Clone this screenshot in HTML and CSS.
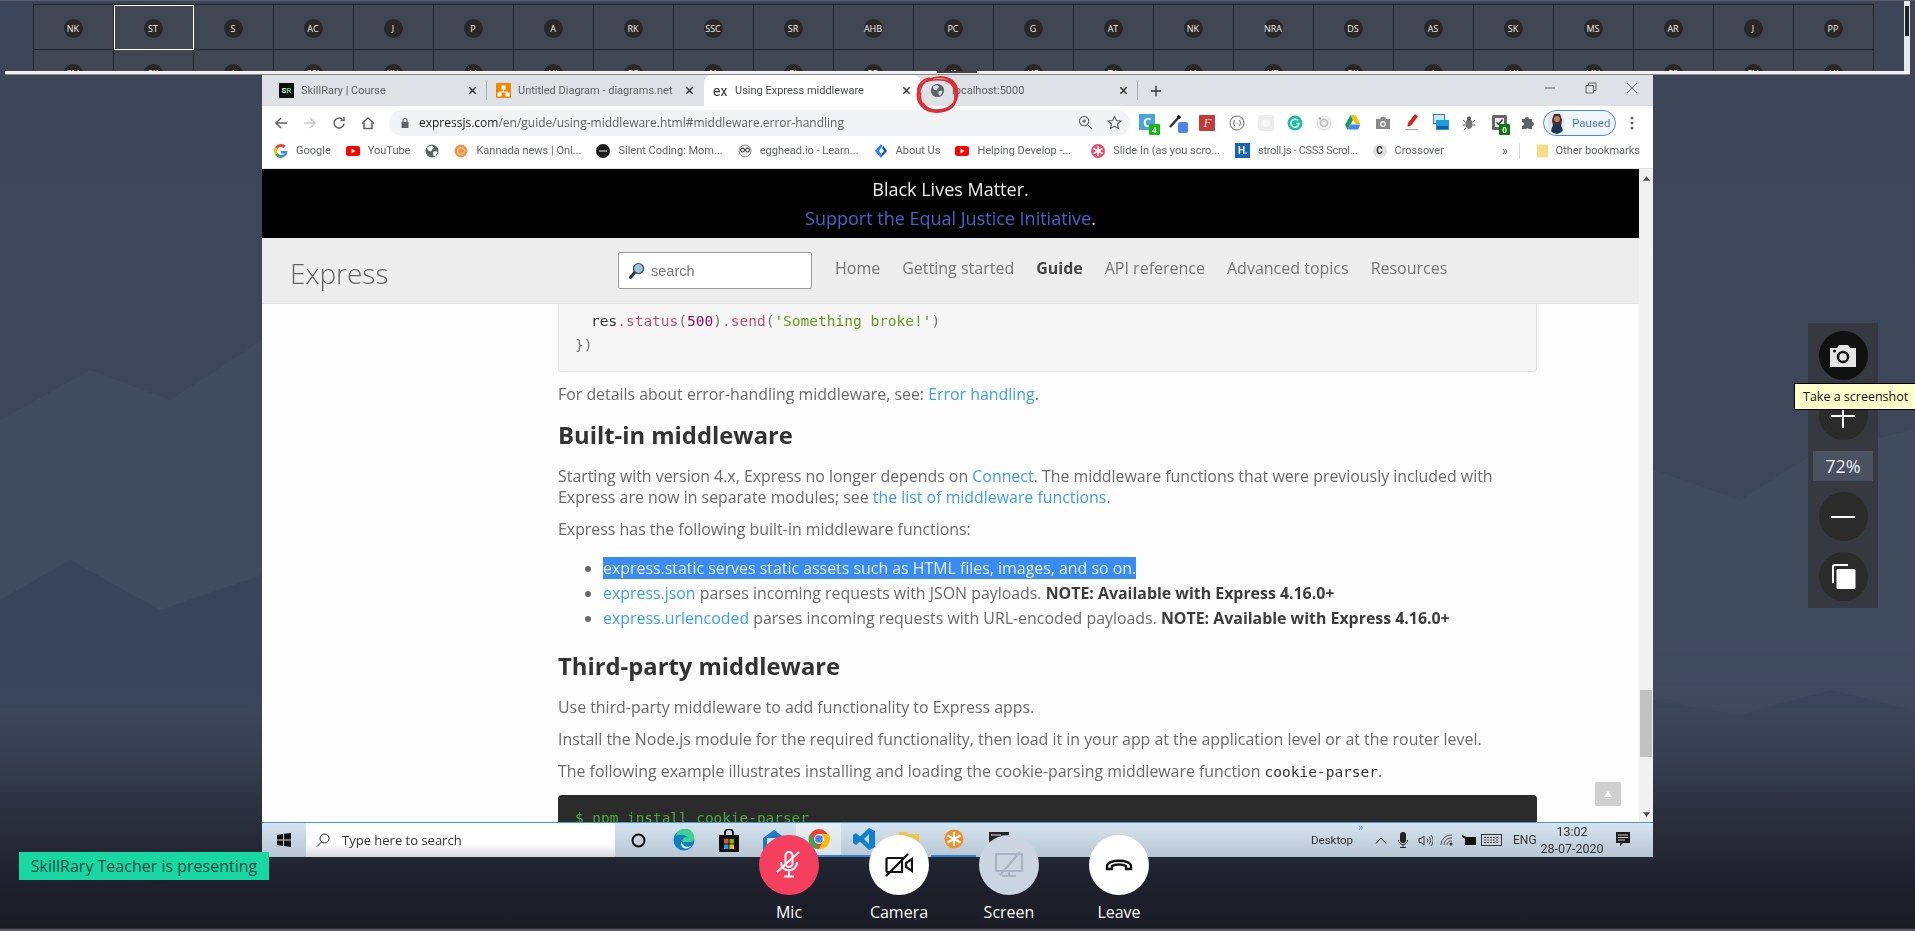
FILE: index.html
```html
<!DOCTYPE html>
<html lang="en">
<head>
<meta charset="utf-8">
<title>SkillRary meeting</title>
<link rel="stylesheet" href="styles.css">
</head>
<body>
<div class="desk">
  <svg class="ridges" viewBox="0 0 1915 931" preserveAspectRatio="none" aria-hidden="true">
    <path fill="#414b5e" d="M0 420 90 370 170 400 262 340 400 420V860H0Z"/>
    <path fill="#3a4559" d="M0 600 70 560 160 610 262 575 300 860H0Z"/>
    <path fill="#414b5e" d="M1653 470 1740 500 1820 450 1915 430V860H1653Z"/>
    <path fill="#3a4559" d="M1653 700 1740 715 1830 690 1915 710V860H1653Z"/>
  </svg>

  <section class="strip">
    <div class="tiles">
      <div class="tile"><span class="avatar">NK</span></div>
      <div class="tile tile-active"><span class="avatar">ST</span></div>
      <div class="tile"><span class="avatar">S</span></div>
      <div class="tile"><span class="avatar">AC</span></div>
      <div class="tile"><span class="avatar">J</span></div>
      <div class="tile"><span class="avatar">P</span></div>
      <div class="tile"><span class="avatar">A</span></div>
      <div class="tile"><span class="avatar">RK</span></div>
      <div class="tile"><span class="avatar">SSC</span></div>
      <div class="tile"><span class="avatar">SR</span></div>
      <div class="tile"><span class="avatar">AHB</span></div>
      <div class="tile"><span class="avatar">PC</span></div>
      <div class="tile"><span class="avatar">G</span></div>
      <div class="tile"><span class="avatar">AT</span></div>
      <div class="tile"><span class="avatar">NK</span></div>
      <div class="tile"><span class="avatar">NRA</span></div>
      <div class="tile"><span class="avatar">DS</span></div>
      <div class="tile"><span class="avatar">AS</span></div>
      <div class="tile"><span class="avatar">SK</span></div>
      <div class="tile"><span class="avatar">MS</span></div>
      <div class="tile"><span class="avatar">AR</span></div>
      <div class="tile"><span class="avatar">J</span></div>
      <div class="tile"><span class="avatar">PP</span></div>
      <div class="tile"><span class="avatar">SM</span></div>
      <div class="tile"><span class="avatar">SK</span></div>
      <div class="tile"><span class="avatar">A</span></div>
      <div class="tile"><span class="avatar">SSI</span></div>
      <div class="tile"><span class="avatar">KN</span></div>
      <div class="tile"><span class="avatar">M</span></div>
      <div class="tile"><span class="avatar">NI</span></div>
      <div class="tile"><span class="avatar">RS</span></div>
      <div class="tile"><span class="avatar">N</span></div>
      <div class="tile"><span class="avatar">RI</span></div>
      <div class="tile"><span class="avatar">PB</span></div>
      <div class="tile"><span class="avatar">K</span></div>
      <div class="tile"><span class="avatar">HS</span></div>
      <div class="tile"><span class="avatar">TA</span></div>
      <div class="tile"><span class="avatar">V</span></div>
      <div class="tile"><span class="avatar">NB</span></div>
      <div class="tile"><span class="avatar">RK</span></div>
      <div class="tile"><span class="avatar">A</span></div>
      <div class="tile"><span class="avatar">AK</span></div>
      <div class="tile"><span class="avatar">MH</span></div>
      <div class="tile"><span class="avatar">SS</span></div>
      <div class="tile"><span class="avatar">RV</span></div>
      <div class="tile"><span class="avatar">AK</span></div>
    </div>
    <div class="strip-scroll"><span class="strip-thumb"></span></div>
  </section>
  <div class="strip-edge"><span class="edge-thumb"></span></div>

  <main class="browser">
    <div class="tabbar">
      <div class="tab">
        <span class="favicon fav-sr">S<b>R</b></span>
        <span class="tab-title">SkillRary | Course</span>
        <svg class="tab-x" viewBox="0 0 10 10"><path d="M1.5 1.5l7 7M8.5 1.5l-7 7"/></svg>
      </div>
      <div class="tab tab-sep">
        <svg class="favicon" viewBox="0 0 15 15"><rect width="15" height="15" rx="1" fill="#f08705"/><path fill="none" stroke="#fff" d="M7.5 6v3M3.5 11V9h8v2"/><rect x="5.5" y="2.5" width="4" height="4" fill="#fff"/><rect x="1.5" y="9.5" width="4" height="4" fill="#fff"/><rect x="9.5" y="9.5" width="4" height="4" fill="#fff"/></svg>
        <span class="tab-title">Untitled Diagram - diagrams.net</span>
        <svg class="tab-x" viewBox="0 0 10 10"><path d="M1.5 1.5l7 7M8.5 1.5l-7 7"/></svg>
      </div>
      <div class="tab tab-on">
        <span class="favicon fav-ex">ex</span>
        <span class="tab-title">Using Express middleware</span>
        <svg class="tab-x" viewBox="0 0 10 10"><path d="M1.5 1.5l7 7M8.5 1.5l-7 7"/></svg>
      </div>
      <div class="tab tab-end">
        <svg class="favicon" viewBox="0 0 16 16"><circle cx="8" cy="8" r="7" fill="#5f6368"/><path fill="#dee1e6" d="M5 3l3-1 2 2-2 2-1 2-3-1-1-3zM9 9l3-1 1.500 1-2 4-2 0z"/></svg>
        <span class="tab-title">localhost:5000</span>
        <svg class="tab-x" viewBox="0 0 10 10"><path d="M1.5 1.5l7 7M8.5 1.5l-7 7"/></svg>
      </div>
      <svg class="tab-new" viewBox="0 0 14 14"><path d="M7 1v12M1 7h12"/></svg>
      <div class="win-btns">
        <svg viewBox="0 0 12 12"><path d="M1 6h10"/></svg>
        <svg viewBox="0 0 12 12"><path d="M1 3.500h7.500V11H1zM3.500 3.500V1H11v7.500H8.500"/></svg>
        <svg viewBox="0 0 12 12"><path d="M1 1l10 10M11 1 1 11"/></svg>
      </div>
    </div>

    <div class="toolbar">
      <div class="nav-btn"><svg viewBox="0 0 14 14"><path d="M13 7H2M7 2 2 7l5 5"/></svg></div>
      <div class="nav-btn nav-off"><svg viewBox="0 0 14 14"><path d="M1 7h11M7 2l5 5-5 5"/></svg></div>
      <div class="nav-btn"><svg viewBox="0 0 14 14"><path d="M12 7.500A5 5 0 1 1 10.500 3.500M12 1v3.500H8.500"/></svg></div>
      <div class="nav-btn"><svg viewBox="0 0 14 14"><path d="M1 7.500 7 2l6 5.500M3 6.500V12.500h8V6.500"/></svg></div>
      <div class="omnibox">
        <svg class="lock" viewBox="0 0 12 12"><path fill="#5f6368" d="M2.500 5h7v6h-7z"/><path fill="none" stroke="#5f6368" stroke-width="1.200" d="M4 5V3.500a2 2 0 0 1 4 0V5"/></svg>
        <span class="url"><span class="url-host">expressjs.com</span>/en/guide/using-middleware.html#middleware.error-handling</span>
        <svg class="omni-ico omni-first" viewBox="0 0 16 16"><circle cx="6.500" cy="6.500" r="5"/><path d="M10.500 10.500 15 15M4.500 6.500h4M6.500 4.500v4"/></svg>
        <svg class="omni-ico" viewBox="0 0 16 16"><path d="M8 1.500l2 4.400 4.800.5-3.600 3.200 1 4.700L8 11.900l-4.200 2.400 1-4.700L1.200 6.400 6 5.900z"/></svg>
      </div>
      <div class="exts">
        <span class="ext"><span class="ext-c">C</span><span class="ext-badge ext-badge-g">4</span></span>
        <span class="ext"><svg width="20" height="20" viewBox="0 0 20 20"><path stroke="#333" stroke-width="2.500" d="M2 14 11 4"/><path stroke="#111" stroke-width="3.500" d="M10 5l2-2"/><rect x="10" y="9" width="10" height="11" rx="2" fill="#4a86f0"/></svg></span>
        <span class="ext"><span class="ext-f">F</span></span>
        <span class="ext"><svg width="16" height="16" viewBox="0 0 16 16"><circle cx="8" cy="8" r="7" fill="#fff" stroke="#666"/><path fill="none" stroke="#666" d="M5.500 5 4.500 8l1 3M10.500 5l1 3-1 3M7.500 8h1"/></svg></span>
        <span class="ext"><svg width="16" height="16" viewBox="0 0 16 16"><rect width="16" height="16" rx="2" fill="#ececec"/><circle cx="8" cy="8" r="4" fill="#f7f7f7"/></svg></span>
        <span class="ext"><svg width="16" height="16" viewBox="0 0 16 16"><circle cx="8" cy="8" r="7.500" fill="#15c39a"/><path fill="none" stroke="#fff" stroke-width="1.500" d="M11 5.500A4 4 0 1 0 12 8.500H9.500"/></svg></span>
        <span class="ext"><svg width="16" height="16" viewBox="0 0 16 16"><circle cx="8" cy="8" r="7" fill="#f1f1f1" stroke="#ddd"/><circle cx="8" cy="8" r="3.500" fill="none" stroke="#bbb" stroke-width="1.500"/><circle cx="4" cy="3.500" r="1.200" fill="#aaa"/></svg></span>
        <span class="ext"><svg width="16" height="15" viewBox="0 0 16 15"><path fill="#fbbc04" d="M5.500 0h5l5 9h-5z"/><path fill="#1a9e5c" d="M5.500 0 0 10l2.500 4.500L8 5z"/><path fill="#4285f4" d="M5.500 9.500h10L13 14.500H2.500z"/></svg></span>
        <span class="ext"><svg width="16" height="14" viewBox="0 0 16 14"><path fill="#8a8a8a" d="M1 3h4l1-2h4l1 2h4v10H1z"/><circle cx="8" cy="8" r="3" fill="#eee"/><circle cx="8" cy="8" r="1.500" fill="#8a8a8a"/></svg></span>
        <span class="ext"><svg width="16" height="17" viewBox="0 0 16 17"><path fill="#e0201b" d="M11 0l3 2.500-7 9-3.500 1.500.5-4z"/><path fill="none" stroke="#c99" d="M1 15.500h13"/></svg></span>
        <span class="ext"><svg width="16" height="17" viewBox="0 0 16 17"><rect x="0.500" y="0.500" width="11" height="9" fill="#cfe6f8" stroke="#2a7fc9"/><rect x="3" y="6" width="13" height="10" fill="#1b9ce0"/><path fill="#0d5f94" d="M4 12h11v3H4z"/></svg></span>
        <span class="ext"><svg width="16" height="16" viewBox="0 0 16 16"><ellipse cx="7" cy="9" rx="3.500" ry="5" fill="#777"/><circle cx="7" cy="3.500" r="2" fill="#555"/><path fill="none" stroke="#555" d="M3.500 7 1 5M3.500 10H.500M4 13l-2 2.500M10.500 7 13 5M10.500 10h3"/></svg></span>
        <span class="ext"><svg width="15" height="15" viewBox="0 0 15 15"><rect width="15" height="15" rx="1.500" fill="#666"/><rect x="3" y="3" width="9" height="9" fill="#eee"/><path fill="none" stroke="#333" stroke-width="1.300" d="M4.500 7.500l2 2 4-5"/></svg><span class="ext-badge ext-badge-d">0</span></span>
        <span class="ext"><svg width="15" height="15" viewBox="0 0 15 15"><path fill="#5f6368" d="M1 4h3a2 2 0 0 1 4 0h3v3a2 2 0 0 1 0 4v3H8a2 2 0 0 0-3 0H1v-3a2 2 0 0 0 0-4z"/></svg></span>
      </div>
      <div class="pill">
        <svg class="pill-face" width="17" height="22" viewBox="0 0 17 22"><rect width="17" height="22" fill="#dfe4ea"/><path fill="#4a2b22" d="M6 2h6l2 6-1 6H5L4 8z"/><circle cx="9" cy="7" r="3" fill="#b98465"/><path fill="#1d3559" d="M3 22c0-8 3-10 6-10s6 2 6 10z"/></svg>
        <span>Paused</span>
      </div>
      <svg class="dots" viewBox="0 0 4 14"><circle cx="2" cy="2" r="1.500"/><circle cx="2" cy="7" r="1.500"/><circle cx="2" cy="12" r="1.500"/></svg>
    </div>

    <div class="bookmarks">
      <span class="bm"><svg class="bm-ico" viewBox="0 0 14 14"><path fill="#4285f4" d="M13.500 7H7v2.500h3.800A4 4 0 0 1 7 11v3a7 7 0 0 0 6.500-7z"/><path fill="#34a853" d="M1 10.500A7 7 0 0 0 7 14v-3a4 4 0 0 1-3.500-2z"/><path fill="#fbbc05" d="M1 3.500a7 7 0 0 0 0 7L3.500 9a4 4 0 0 1 0-4z"/><path fill="#ea4335" d="M7 0a7 7 0 0 0-6 3.500L3.500 5A4 4 0 0 1 9.500 4L12 2A7 7 0 0 0 7 0z"/></svg>Google</span>
      <span class="bm"><svg class="bm-ico" viewBox="0 0 14 14"><rect y="2" width="14" height="10" rx="2.500" fill="#f00"/><path fill="#fff" d="M5.500 4.500 9.500 7l-4 2.500z"/></svg>YouTube</span>
      <span class="bm"><svg class="bm-ico" viewBox="0 0 14 14"><circle cx="7" cy="7" r="6.500" fill="#5f6368"/><path fill="#fff" d="M4 2.500l3-1 2 2-2 2-1 2-3-1-1-3zM8 8l3-1 1.500 1-2 4-2 0z"/></svg></span>
      <span class="bm"><svg class="bm-ico" viewBox="0 0 14 14"><circle cx="7" cy="7" r="6.500" fill="#f0944a"/><circle cx="7" cy="7" r="3.500" fill="none" stroke="#fbd9b8"/></svg>Kannada news | Onl...</span>
      <span class="bm"><svg class="bm-ico" viewBox="0 0 14 14"><circle cx="7" cy="7" r="7" fill="#1c1c1c"/><path stroke="#aaa" stroke-width="1.500" d="M3 7h8"/></svg>Silent Coding: Mom...</span>
      <span class="bm"><svg class="bm-ico" viewBox="0 0 14 14"><circle cx="7" cy="7" r="6" fill="#eee" stroke="#888"/><circle cx="4.500" cy="6" r="2" fill="#fff" stroke="#222"/><circle cx="9.500" cy="6" r="2" fill="#fff" stroke="#222"/></svg>egghead.io - Learn...</span>
      <span class="bm"><svg class="bm-ico" viewBox="0 0 14 14"><path fill="#2684ff" d="M7 0 1 7l6 7 1.500-2L5 7l3.500-5z"/><path fill="#0052cc" d="M8 4l2 3-2.500 3 1 2L13 7 9.500 2z"/></svg>About Us</span>
      <span class="bm"><svg class="bm-ico" viewBox="0 0 14 14"><rect y="2" width="14" height="10" rx="2.500" fill="#f00"/><path fill="#fff" d="M5.500 4.500 9.500 7l-4 2.500z"/></svg>Helping Develop -...</span>
      <span class="bm bm-wide"><svg class="bm-ico" viewBox="0 0 14 14"><circle cx="7" cy="7" r="7" fill="#ea4c6c"/><path stroke="#fff" stroke-width="1.500" d="M7 2v10M2.500 4.500l9 5M11.500 4.500l-9 5"/></svg>Slide In (as you scro...</span>
      <span class="bm bm-tight"><span class="bm-h">H.</span>stroll.js - CSS3 Scrol...</span>
      <span class="bm"><span class="bm-c">C</span>Crossover</span>
      <span class="bm-more">»</span>
      <span class="bm-sep"></span>
      <span class="bm bm-other"><svg class="bm-folder" viewBox="0 0 12 14"><path fill="#fbdc85" d="M0 0h12v14H0z"/></svg>Other bookmarks</span>
    </div>

    <div class="view">
      <div class="page">
        <div class="banner">
          <div>Black Lives Matter.</div>
          <div><a class="banner-link">Support the Equal Justice Initiative</a>.</div>
        </div>
        <header class="site-head">
          <span class="brand">Express</span>
          <div class="search">
            <svg width="17" height="18" viewBox="0 0 17 18"><path stroke="#333" stroke-width="3" stroke-linecap="round" d="M2.500 15.500 7 10"/><circle cx="10.500" cy="6.500" r="5" fill="#9cc6e8" stroke="#444" stroke-width="1.200"/></svg>
            <span>search</span>
          </div>
          <nav class="site-nav">
            <span>Home</span>
            <span>Getting started</span>
            <span class="nav-cur">Guide</span>
            <span>API reference</span>
            <span>Advanced topics</span>
            <span>Resources</span>
          </nav>
        </header>
        <article class="doc">
          <div class="code">
            <div class="code-line code-indent"><span class="c-id">res</span><span class="c-fn">.status</span><span>(</span><span class="c-num">500</span><span>)</span><span class="c-fn">.send</span><span>(</span><span class="c-str">'Something broke!'</span><span>)</span></div>
            <div class="code-line">})</div>
          </div>
          <p>For details about error-handling middleware, see: <a>Error handling</a>.</p>
          <h2>Built-in middleware</h2>
          <p>Starting with version 4.x, Express no longer depends on <a>Connect</a>. The middleware functions that were previously included with Express are now in separate modules; see <a>the list of middleware functions</a>.</p>
          <p>Express has the following built-in middleware functions:</p>
          <ul>
            <li><span class="picked">express.static serves static assets such as HTML files, images, and so on.</span></li>
            <li><a>express.json</a> parses incoming requests with JSON payloads. <b>NOTE: Available with Express 4.16.0+</b></li>
            <li><a>express.urlencoded</a> parses incoming requests with URL-encoded payloads. <b>NOTE: Available with Express 4.16.0+</b></li>
          </ul>
          <h2 class="h2-next">Third-party middleware</h2>
          <p>Use third-party middleware to add functionality to Express apps.</p>
          <p>Install the Node.js module for the required functionality, then load it in your app at the application level or at the router level.</p>
          <p>The following example illustrates installing and loading the cookie-parsing middleware function <code>cookie-parser</code>.</p>
          <pre class="code-dark">$ npm install cookie-parser</pre>
        </article>
        <div class="to-top"><svg width="8" height="6" viewBox="0 0 8 6"><path fill="#fff" d="M4 0l4 6H0z"/></svg></div>
      </div>
      <div class="vscroll">
        <svg class="v-arrow" viewBox="0 0 8 5"><path d="M4 0l4 5H0z"/></svg>
        <span class="v-thumb"></span>
        <svg class="v-arrow v-arrow-down" viewBox="0 0 8 5"><path d="M0 0h8L4 5z"/></svg>
      </div>
    </div>

    <footer class="taskbar">
      <svg class="win-logo" viewBox="0 0 14 14"><path fill="#111" d="M0 2l6-1v5.500H0zM7 .800l7-.8v6.500H7zM0 7.500h6V13l-6-1zM7 7.500h7V14l-7-1z"/></svg>
      <div class="task-search">
        <svg width="14" height="14" viewBox="0 0 14 14"><circle cx="8.500" cy="5.500" r="4.500" fill="none" stroke="#222"/><path stroke="#222" d="M5.500 9 1 13.500"/></svg>
        <span>Type here to search</span>
      </div>
      <div class="task-apps">
        <span class="app"><svg width="15" height="15" viewBox="0 0 15 15"><circle cx="7.500" cy="7.500" r="6" fill="none" stroke="#111" stroke-width="2"/></svg></span>
        <span class="app"><svg width="22" height="22" viewBox="0 0 22 22"><circle cx="11" cy="11" r="10.500" fill="#0f7fc4"/><path fill="#3fd08f" d="M3 7a9 9 0 0 1 18 3c0 3-3 3-5 3H9c0-5 6-6 7-3-2-5-10-5-13-3z"/><path fill="#d8f5ff" d="M9 13c0 4 5 6 9 4-5 5-11 2-10-4z"/></svg></span>
        <span class="app"><svg width="20" height="23" viewBox="0 0 20 23"><path fill="none" stroke="#111" stroke-width="2" d="M6 7V4a4 4 0 0 1 8 0v3"/><rect y="6" width="20" height="17" fill="#111"/><rect x="5" y="10" width="4.500" height="4.500" fill="#f25022"/><rect x="10.500" y="10" width="4.500" height="4.500" fill="#7fba00"/><rect x="5" y="15.500" width="4.500" height="4.500" fill="#00a4ef"/><rect x="10.500" y="15.500" width="4.500" height="4.500" fill="#ffb900"/></svg></span>
        <span class="app"><svg width="22" height="20" viewBox="0 0 22 20"><path fill="#1f78c8" d="M0 8 11 0l11 8v12H0z"/><path fill="#bfe3f7" d="M4 8h14v6l-7 4-7-4z"/></svg></span>
        <span class="app app-lit app-open"><svg width="22" height="22" viewBox="0 0 22 22"><circle cx="11" cy="11" r="10" fill="#ea4335"/><path fill="#fbbc05" d="M11 6h9.500A10 10 0 0 1 11 21l4-8z"/><path fill="#34a853" d="M2 6l5 8 4 7A10 10 0 0 1 2 6z"/><circle cx="11" cy="11" r="5" fill="#fff"/><circle cx="11" cy="11" r="3.800" fill="#4285f4"/></svg></span>
        <span class="app app-open"><svg width="22" height="22" viewBox="0 0 22 22"><path fill="#0f7fd0" d="M16 0l6 3v16l-6 3-9-8.500L3 17l-3-2V7l3-2 4 3.500zM16 6l-5 5 5 5z"/></svg></span>
        <span class="app"><svg width="20" height="18" viewBox="0 0 20 18"><path fill="#f2c24e" d="M0 1h7l2 2h11v15H0z"/></svg></span>
        <span class="app app-open"><svg width="20" height="20" viewBox="0 0 20 20"><circle cx="10" cy="10" r="9.500" fill="#ef8f2d"/><circle cx="10" cy="10" r="2" fill="#fff"/><path stroke="#fff" stroke-width="2" d="M10 3v14M3.500 6.500l13 7M16.500 6.500l-13 7"/></svg></span>
        <span class="app"><svg width="20" height="16" viewBox="0 0 20 16"><rect width="20" height="16" fill="#222"/><path stroke="#ddd" d="M2 3h10"/></svg></span>
      </div>
      <div class="tray">
        <span class="tray-desk">Desktop</span>
        <span class="tray-more">»</span>
        <span class="tray-ico"><svg width="12" height="7" viewBox="0 0 12 7"><path fill="none" stroke="#222" d="M1 6.500 6 1l5 5.500"/></svg></span>
        <span class="tray-ico"><svg width="10" height="16" viewBox="0 0 10 16"><rect x="2" width="6" height="11" rx="3" fill="#222"/><path fill="none" stroke="#222" d="M.5 8a4.500 4.500 0 0 0 9 0M5 12.500V15.500M2 15.500h6"/></svg></span>
        <span class="tray-ico"><svg width="15" height="13" viewBox="0 0 15 13"><path fill="none" stroke="#333" d="M1 4.500h2L6 2v9L3 8.500H1zM9 4.500a3 3 0 0 1 0 4M11 2.500a6 6 0 0 1 0 8M13 1a8 8 0 0 1 0 11"/></svg></span>
        <span class="tray-ico"><svg width="14" height="12" viewBox="0 0 14 12"><path fill="none" stroke="#555" d="M1 11A10 10 0 0 1 12 1M4 11A7 7 0 0 1 12 4M7 11A4 4 0 0 1 12 7"/><circle cx="11" cy="10" r="1.500" fill="#333"/></svg></span>
        <span class="tray-ico"><svg width="15" height="10" viewBox="0 0 15 10"><rect x="3" y="2" width="11" height="8" fill="#111"/><path stroke="#111" stroke-width="2" d="M0 1l4 2"/></svg></span>
        <span class="tray-ico"><svg width="21" height="12" viewBox="0 0 21 12"><rect x=".5" y=".5" width="20" height="11" fill="#c9d5e0" stroke="#333"/><path stroke="#444" stroke-dasharray="2 1" d="M3 3.500h15M3 6h15M3 8.500h15"/></svg></span>
        <span class="tray-lang">ENG</span>
        <span class="clock"><span>13:02</span><span>28-07-2020</span></span>
        <svg class="notif" width="14" height="16" viewBox="0 0 14 16"><path fill="#1a1a1a" d="M0 0h14v11H7l-3 3v-3H0z"/><path stroke="#ccc" d="M2 3h10M2 5.500h10M2 8h7"/></svg>
      </div>
    </footer>
  </main>

  <svg class="scribble" viewBox="3 1 41 38" aria-hidden="true">
    <path d="M14 6C24 1 38 2 42 12 46 24 38 36 25 37 12 38 3 30 4 19 5 9 15 3 27 3 37 4 44 13 42 24 40 33 30 39 19 36 8 33 2 23 6 13 9 6 20 5 30 6 39 8 43 17 40 27 36 35 26 36 17 35 9 33 6 26 7 18"/>
    <path d="M6 24C9 34 20 38 30 36 36 35 40 31 41 26M9 28C14 36 26 38 34 33M8 31C14 37 28 38 37 31M4 16C5 9 9 5 16 4"/>
    <path d="M38 10C41 15 42 20 40 27M11 8C8 11 6 15 6 20"/>
  </svg>

  <div class="presenter">SkillRary Teacher is presenting</div>

  <div class="dock">
    <div class="dock-item">
      <span class="dock-btn btn-red"><svg width="28" height="30" viewBox="0 0 28 30"><rect x="10.500" y="2" width="7" height="15" rx="3.500" fill="none" stroke="#fff" stroke-width="2"/><path fill="none" stroke="#fff" stroke-width="2" d="M6 12c0 11 16 11 16 0M14 20v6M9 26.500h10M2 22 24 2"/></svg></span>
      <span class="dock-label">Mic</span>
    </div>
    <div class="dock-item">
      <span class="dock-btn"><svg width="28" height="24" viewBox="0 0 28 24"><path fill="none" stroke="#111" stroke-width="2.200" d="M17 5H3a1.500 1.500 0 0 0-1.500 1.500v11A1.500 1.500 0 0 0 3 19h14V5zM27 6l-6 4v4l6 4zM1 23 23 1"/></svg></span>
      <span class="dock-label">Camera</span>
    </div>
    <div class="dock-item">
      <span class="dock-btn btn-muted"><svg width="30" height="28" viewBox="0 0 30 28"><path fill="none" stroke="#a8b3c6" stroke-width="2.200" d="M2 3h26v17H2zM15 20v4M8 25h14M6 24 26 1"/></svg></span>
      <span class="dock-label">Screen</span>
    </div>
    <div class="dock-item">
      <span class="dock-btn"><svg width="28" height="14" viewBox="0 0 28 14"><path fill="none" stroke="#111" stroke-width="2.400" d="M2 11V8c0-7 24-7 24 0v3h-5V8c-3-2-11-2-14 0v3z"/></svg></span>
      <span class="dock-label">Leave</span>
    </div>
  </div>

  <aside class="zoom-rail">
    <span class="rail-btn rail-shot"><svg width="28" height="22" viewBox="0 0 28 22"><path fill="#e6e6e6" d="M1 3h7l2-3h9l2 3h6v19H1z"/><circle cx="14" cy="12" r="5" fill="none" stroke="#111" stroke-width="2.500"/><circle cx="5.500" cy="6" r="1.500" fill="#111"/></svg></span>
    <span class="rail-btn"><svg width="24" height="24" viewBox="0 0 24 24"><path stroke="#fff" stroke-width="2" d="M12 0v24M0 12h24"/></svg></span>
    <span class="rail-value">72%</span>
    <span class="rail-btn"><svg width="24" height="2" viewBox="0 0 24 2"><path stroke="#fff" stroke-width="2" d="M0 1h24"/></svg></span>
    <span class="rail-btn"><svg width="25" height="25" viewBox="0 0 25 25"><path fill="none" stroke="#fff" stroke-width="2" d="M2 19V3a2 2 0 0 1 2-2h13"/><rect x="5.500" y="5" width="19" height="20" rx="1.500" fill="#fff"/></svg></span>
  </aside>
  <div class="tooltip">Take a screenshot</div>
</div>
</body>
</html>
```
FILE: styles.css
```css
* { box-sizing: border-box; }
html, body { margin: 0; height: 100%; overflow: hidden; }
body { font-family: "Open Sans", "Noto Sans", sans-serif; }
svg { display: block; flex: none; }

.desk {
  position: relative;
  width: 1915px;
  height: 931px;
  overflow: hidden;
  background: linear-gradient(#3d4659 0, #3e4759 76%, #2a2f3e 88%, #1f222e 94%, #1a1c26 99.700%, #55585f 99.800%);
}
.ridges {
  position: absolute;
  inset: 0;
  width: 100%;
  height: 100%;
  -webkit-mask-image: linear-gradient(#000 68%, transparent 86%);
  mask-image: linear-gradient(#000 68%, transparent 86%);
}

/* participant strip */
.strip {
  position: relative;
  display: flex;
  height: 71px;
  padding-left: 32.500px;
  border-top: 1px solid #5a5f6b;
  overflow: hidden;
}
.tiles {
  display: grid;
  grid-template-columns: repeat(23, 80px);
  grid-auto-rows: 45px;
  align-self: flex-start;
  margin-top: 3px;
  border-top: 1px solid #22262e;
  border-left: 1px solid #22262e;
  background: #414653;
}
.tile {
  display: flex;
  justify-content: center;
  padding-top: 14px;
  border-right: 1px solid #22262e;
  border-bottom: 1px solid #22262e;
}
.tile-active { outline: 1px solid #fff; outline-offset: -1px; }
.avatar {
  display: flex;
  align-items: center;
  justify-content: center;
  width: 19px;
  height: 19px;
  border-radius: 50%;
  background: #2a2827;
  color: #eee;
  font-size: 9px;
}
.strip-scroll {
  width: 6px;
  margin-left: 30.500px;
  background: #e8e8e8;
}
.strip-thumb { display: block; width: 4px; height: 30px; margin: 5px 0 0 1px; background: #222; }
.strip-edge {
  position: relative;
  height: 4px;
  margin: 0 5px;
  background: #f1f1f1;
  border-bottom: 1px solid #888;
}
.edge-thumb {
  display: block;
  width: 40px;
  height: 2px;
  margin-left: 932px;
  background: #444;
}

/* browser */
.browser {
  position: relative;
  display: flex;
  flex-direction: column;
  width: 1391px;
  height: 782px;
  margin-left: 262px;
  background: #fff;
  filter: blur(0.35px);
}
.tabbar {
  display: flex;
  align-items: center;
  height: 31px;
  padding-left: 8px;
  background: #dee1e6;
  color: #5f6368;
  font-family: Roboto, sans-serif;
  font-size: 11px;
}
.tab {
  display: flex;
  align-items: center;
  flex: none;
  width: 217px;
  height: 31px;
  padding: 0 10px 0 9px;
}
.tab:first-child, .tab-end {
  background: linear-gradient(#dee1e6 6px, #a9adb3 6px, #a9adb3 25px, #dee1e6 25px) right center / 1px 100% no-repeat;
}
.tab-on { background: #fff; border-radius: 8px 8px 0 0; color: #45494f; }
.favicon { width: 15px; height: 15px; flex: none; }
.fav-sr {
  display: flex;
  align-items: center;
  justify-content: center;
  background: #0b0f0d;
  color: #fff;
  font-size: 8px;
  font-weight: 700;
  line-height: 1;
}
.fav-sr b { color: #5fc26a; }
.fav-ex { display: flex; align-items: center; color: #333; font-size: 14px; line-height: 1; }
.tab-title { flex: 1; margin-left: 7px; white-space: nowrap; overflow: hidden; }
.tab-x { width: 9px; height: 9px; fill: none; stroke: #333; stroke-width: 1.600; }
.tab-new { width: 12px; height: 12px; margin-left: 12px; fill: none; stroke: #333; stroke-width: 1.600; }
.win-btns { display: flex; gap: 29px; margin-left: auto; margin-right: 15px; align-self: flex-start; margin-top: 7px; }
.win-btns svg { width: 12px; height: 12px; fill: none; stroke: #5f6368; }

.toolbar {
  display: flex;
  align-items: center;
  height: 33px;
  padding-left: 4.500px;
  background: #fff;
}
.nav-btn { display: flex; justify-content: center; width: 29px; }
.nav-btn svg { width: 14px; height: 14px; fill: none; stroke: #5f6368; stroke-width: 1.500; }
.nav-off svg { stroke: #c5c8cc; }
.omnibox {
  display: flex;
  align-items: center;
  width: 741px;
  height: 26px;
  margin-left: 6.500px;
  padding: 0 8px 0 10px;
  border-radius: 13px;
  background: #f1f3f4;
  color: #5f6368;
  font-size: 12px;
  white-space: nowrap;
}
.lock { width: 12px; height: 12px; margin-right: 8px; }
.url-host { color: #202124; }
.omni-ico { width: 15px; height: 15px; fill: none; stroke: #5f6368; stroke-width: 1.200; margin-left: 14px; }
.omni-first { margin-left: auto; }
.exts { display: flex; margin-left: 4.500px; }
.ext { position: relative; display: flex; align-items: center; justify-content: center; width: 29.200px; height: 26px; }
.ext-c {
  display: flex; align-items: center; justify-content: center;
  width: 16px; height: 16px;
  background: #4aa3dc; color: #fff; font-size: 13px; font-weight: 700;
  transform: translate(-2px, -1px);
}
.ext-f {
  display: flex; align-items: center; justify-content: center;
  width: 16px; height: 16px; border-radius: 1px;
  background: #c33a3a; color: #f6dada; font-family: "Liberation Serif", serif; font-size: 13px; font-style: italic;
}
.ext-badge {
  position: absolute;
  right: 4px;
  bottom: 1px;
  width: 11px;
  height: 11px;
  border-radius: 1px;
  color: #fff;
  font-size: 8px;
  font-weight: 700;
  line-height: 11px;
  text-align: center;
}
.ext-badge-g { background: #14b814; }
.ext-badge-d { background: #0b7a0b; }
.pill {
  display: flex;
  align-items: center;
  gap: 7px;
  width: 73px;
  height: 26px;
  border: 1px solid #4a8ae8;
  border-radius: 13px;
  padding-left: 4px;
  background: #f1f5fc;
  color: #4a78d8;
  font-family: Roboto, sans-serif;
  font-size: 11.500px;
}
.pill-face { border-radius: 50%; }
.dots { width: 4px; height: 14px; margin-left: 14px; fill: #5f6368; }

.bookmarks {
  display: flex;
  align-items: center;
  gap: 15px;
  height: 30px;
  padding: 0 13px 6px 12px;
  border-bottom: 1px solid #e2e2e2;
  color: #5f6368;
  font-family: Roboto, sans-serif;
  font-size: 11px;
  white-space: nowrap;
}
.bm { display: flex; align-items: center; gap: 8px; flex: none; }
.bm-wide { margin-left: 5px; }
.bm-tight { letter-spacing: -0.3px; }
.bm-ico { width: 14px; height: 14px; }
.bm-h {
  width: 15px; height: 15px; background: #1565b5; color: #fff;
  font-size: 10px; font-weight: 700; line-height: 15px; text-align: center;
}
.bm-c {
  width: 14px; height: 14px; border-radius: 50%; background: #e2e2e2; color: #333;
  font-size: 10px; font-weight: 700; line-height: 14px; text-align: center;
}
.bm-more { margin-left: auto; color: #555; font-size: 12px; }
.bm-sep { width: 1px; height: 16px; margin: 0 -4px; background: #d5d5d5; }
.bm-other { margin-left: 6px; gap: 8px; }
.bm-folder { width: 11px; height: 14px; }

.view { display: flex; flex: 1; min-height: 0; }
.page { position: relative; flex: 1; min-width: 0; overflow: hidden; background: #fdfdfd; }
.banner {
  height: 69px;
  padding-top: 6px;
  background: #000;
  color: #eee;
  font-size: 18px;
  line-height: 29px;
  text-align: center;
}
.banner-link { color: #4563c9; }
.site-head {
  display: flex;
  height: 66px;
  padding-left: 28px;
  background: #ededed;
  border-bottom: 1px solid #e2e2e2;
  color: #777;
}
.brand { width: 328px; font-size: 28px; font-weight: 300; line-height: 70px; color: #666; }
.search {
  display: flex;
  align-items: center;
  gap: 6px;
  width: 194px;
  height: 37px;
  margin-top: 14px;
  padding-left: 9px;
  border: 1px solid #999;
  border-radius: 2px;
  background: #fff;
  color: #777;
  font-family: "Liberation Sans", sans-serif;
  font-size: 14.500px;
}
.site-nav { display: flex; gap: 22px; margin-left: 23px; font-size: 16px; line-height: 60px; }
.nav-cur { color: #444; font-weight: 700; }
.doc { width: 979px; margin-left: 296px; color: #6a6a6a; font-size: 15.900px; line-height: 21px; }
.code {
  height: 68px;
  margin: 0 0 12px;
  padding: 5px 16px 0;
  border: 1px solid #e0e0e0;
  border-top: 0;
  border-radius: 0 0 4px 4px;
  background: #f6f6f6;
  color: #777;
  font-family: "DejaVu Sans Mono", monospace;
  font-size: 14.500px;
  line-height: 24px;
}
.code-line { white-space: pre; }
.code-indent { padding-left: 16px; }
.c-id { color: #333; }
.c-fn { color: #c7526e; }
.c-num { color: #900a5a; }
.c-str { color: #6d9a1f; }
.doc p { margin: 0 0 11px; }
.doc a { color: #3f9ee8; }
.doc b { color: #3c3c3c; }
.doc h2 { margin: 15px 0 16px; color: #333; font-size: 23.800px; font-weight: 700; line-height: 30px; }
.doc h2.h2-next { margin-top: 20px; }
.doc ul { margin: 16px 0 0; padding-left: 45px; line-height: 25px; }
.picked { background: #3b8cf0; color: #e6f0ff; }
.doc code { color: #333; font-family: "DejaVu Sans Mono", monospace; font-size: 14.500px; }
.code-dark {
  height: 60px;
  margin: 11.500px 0 0;
  padding: 11px 17px;
  border-radius: 4px;
  background: #2b2b2b;
  color: #4ba93f;
  font-family: "DejaVu Sans Mono", monospace;
  font-size: 14.400px;
  line-height: 24px;
}
.to-top {
  position: absolute;
  right: 18px;
  bottom: 16px;
  display: flex;
  align-items: center;
  justify-content: center;
  width: 26px;
  height: 24px;
  border-radius: 2px;
  background: #cfcfcf;
}
.vscroll {
  display: flex;
  flex-direction: column;
  align-items: center;
  width: 14px;
  padding-top: 7px;
  background: #f1f1f1;
}
.v-arrow { width: 7px; height: 5px; fill: #505050; }
.v-thumb { display: block; width: 12px; height: 67px; margin-top: 509px; background: #c1c1c1; }
.v-arrow-down { margin-top: auto; margin-bottom: 5px; }

.taskbar {
  display: flex;
  align-items: center;
  height: 35px;
  border-top: 1px solid #3e9ad8;
  background: linear-gradient(#d6e4f0, #b8c6d4);
  color: #222;
  font-size: 12px;
}
.win-logo { width: 14px; height: 14px; margin: 0 15px; }
.task-search {
  display: flex;
  align-items: center;
  gap: 12px;
  width: 309px;
  height: 34px;
  padding-left: 10px;
  background: linear-gradient(#fff 60%, #d8d8d8);
  color: #333;
  font-size: 13px;
}
.task-apps { display: flex; margin-left: 1px; height: 34px; }
.app { display: flex; align-items: center; justify-content: center; width: 45px; }
.app-lit { background: rgba(255, 255, 255, 0.45); }
.app-open { border-bottom: 2px solid #2f83d0; }
.tray { display: flex; align-items: center; margin-left: auto; padding-right: 23px; color: #333; font-family: Roboto, sans-serif; white-space: nowrap; }
.tray-desk { width: 39px; margin-right: 8px; font-size: 11.500px; }
.tray-more { width: 12px; align-self: flex-start; color: #6c8cb0; font-size: 11px; line-height: 10px; }
.tray-ico { display: flex; justify-content: center; width: 22px; }
.tray-lang { width: 21px; margin-left: 11px; font-size: 12px; }
.clock { display: flex; flex-direction: column; align-items: center; width: 60px; margin-left: 8px; font-size: 12.500px; line-height: 17px; white-space: nowrap; }
.notif { margin-left: 14px; }

/* overlays */
.scribble {
  position: absolute;
  left: 914px;
  top: 75px;
  width: 47px;
  height: 39px;
  fill: none;
  stroke: #dc2f35;
  stroke-width: 1.700;
}
.presenter {
  position: absolute;
  left: 19px;
  top: 852px;
  width: 250px;
  height: 28px;
  background: #17d8a2;
  color: #17474a;
  font-size: 16px;
  line-height: 28px;
  text-align: center;
}
.dock { position: absolute; left: 759px; top: 835px; display: flex; gap: 50px; }
.dock-item { display: flex; flex-direction: column; align-items: center; width: 60px; }
.dock-btn {
  display: flex;
  align-items: center;
  justify-content: center;
  width: 60px;
  height: 60px;
  border-radius: 50%;
  background: #fff;
}
.btn-red { background: #f43f5e; }
.btn-muted { background: #cbd5e1; }
.dock-label { margin-top: 6px; color: #fff; font-size: 16px; line-height: 22px; white-space: nowrap; }
.zoom-rail {
  position: absolute;
  left: 1808px;
  top: 323px;
  display: flex;
  flex-direction: column;
  align-items: center;
  gap: 11px;
  width: 70px;
  height: 285px;
  padding-top: 8px;
  background: #36393f;
}
.rail-btn {
  display: flex;
  align-items: center;
  justify-content: center;
  width: 49px;
  height: 49px;
  border-radius: 50%;
  background: #2b2b2b;
}
.rail-shot { background: #111; }
.rail-value {
  width: 60px;
  height: 30px;
  background: #4a5160;
  color: #e8f0f8;
  font-size: 18px;
  line-height: 30px;
  text-align: center;
}
.tooltip {
  position: absolute;
  left: 1794px;
  top: 383px;
  width: 125px;
  height: 27px;
  padding-left: 8px;
  border: 1px solid #000;
  background: #ffffcc;
  color: #111;
  font-size: 12.500px;
  line-height: 25px;
  white-space: nowrap;
}
```
